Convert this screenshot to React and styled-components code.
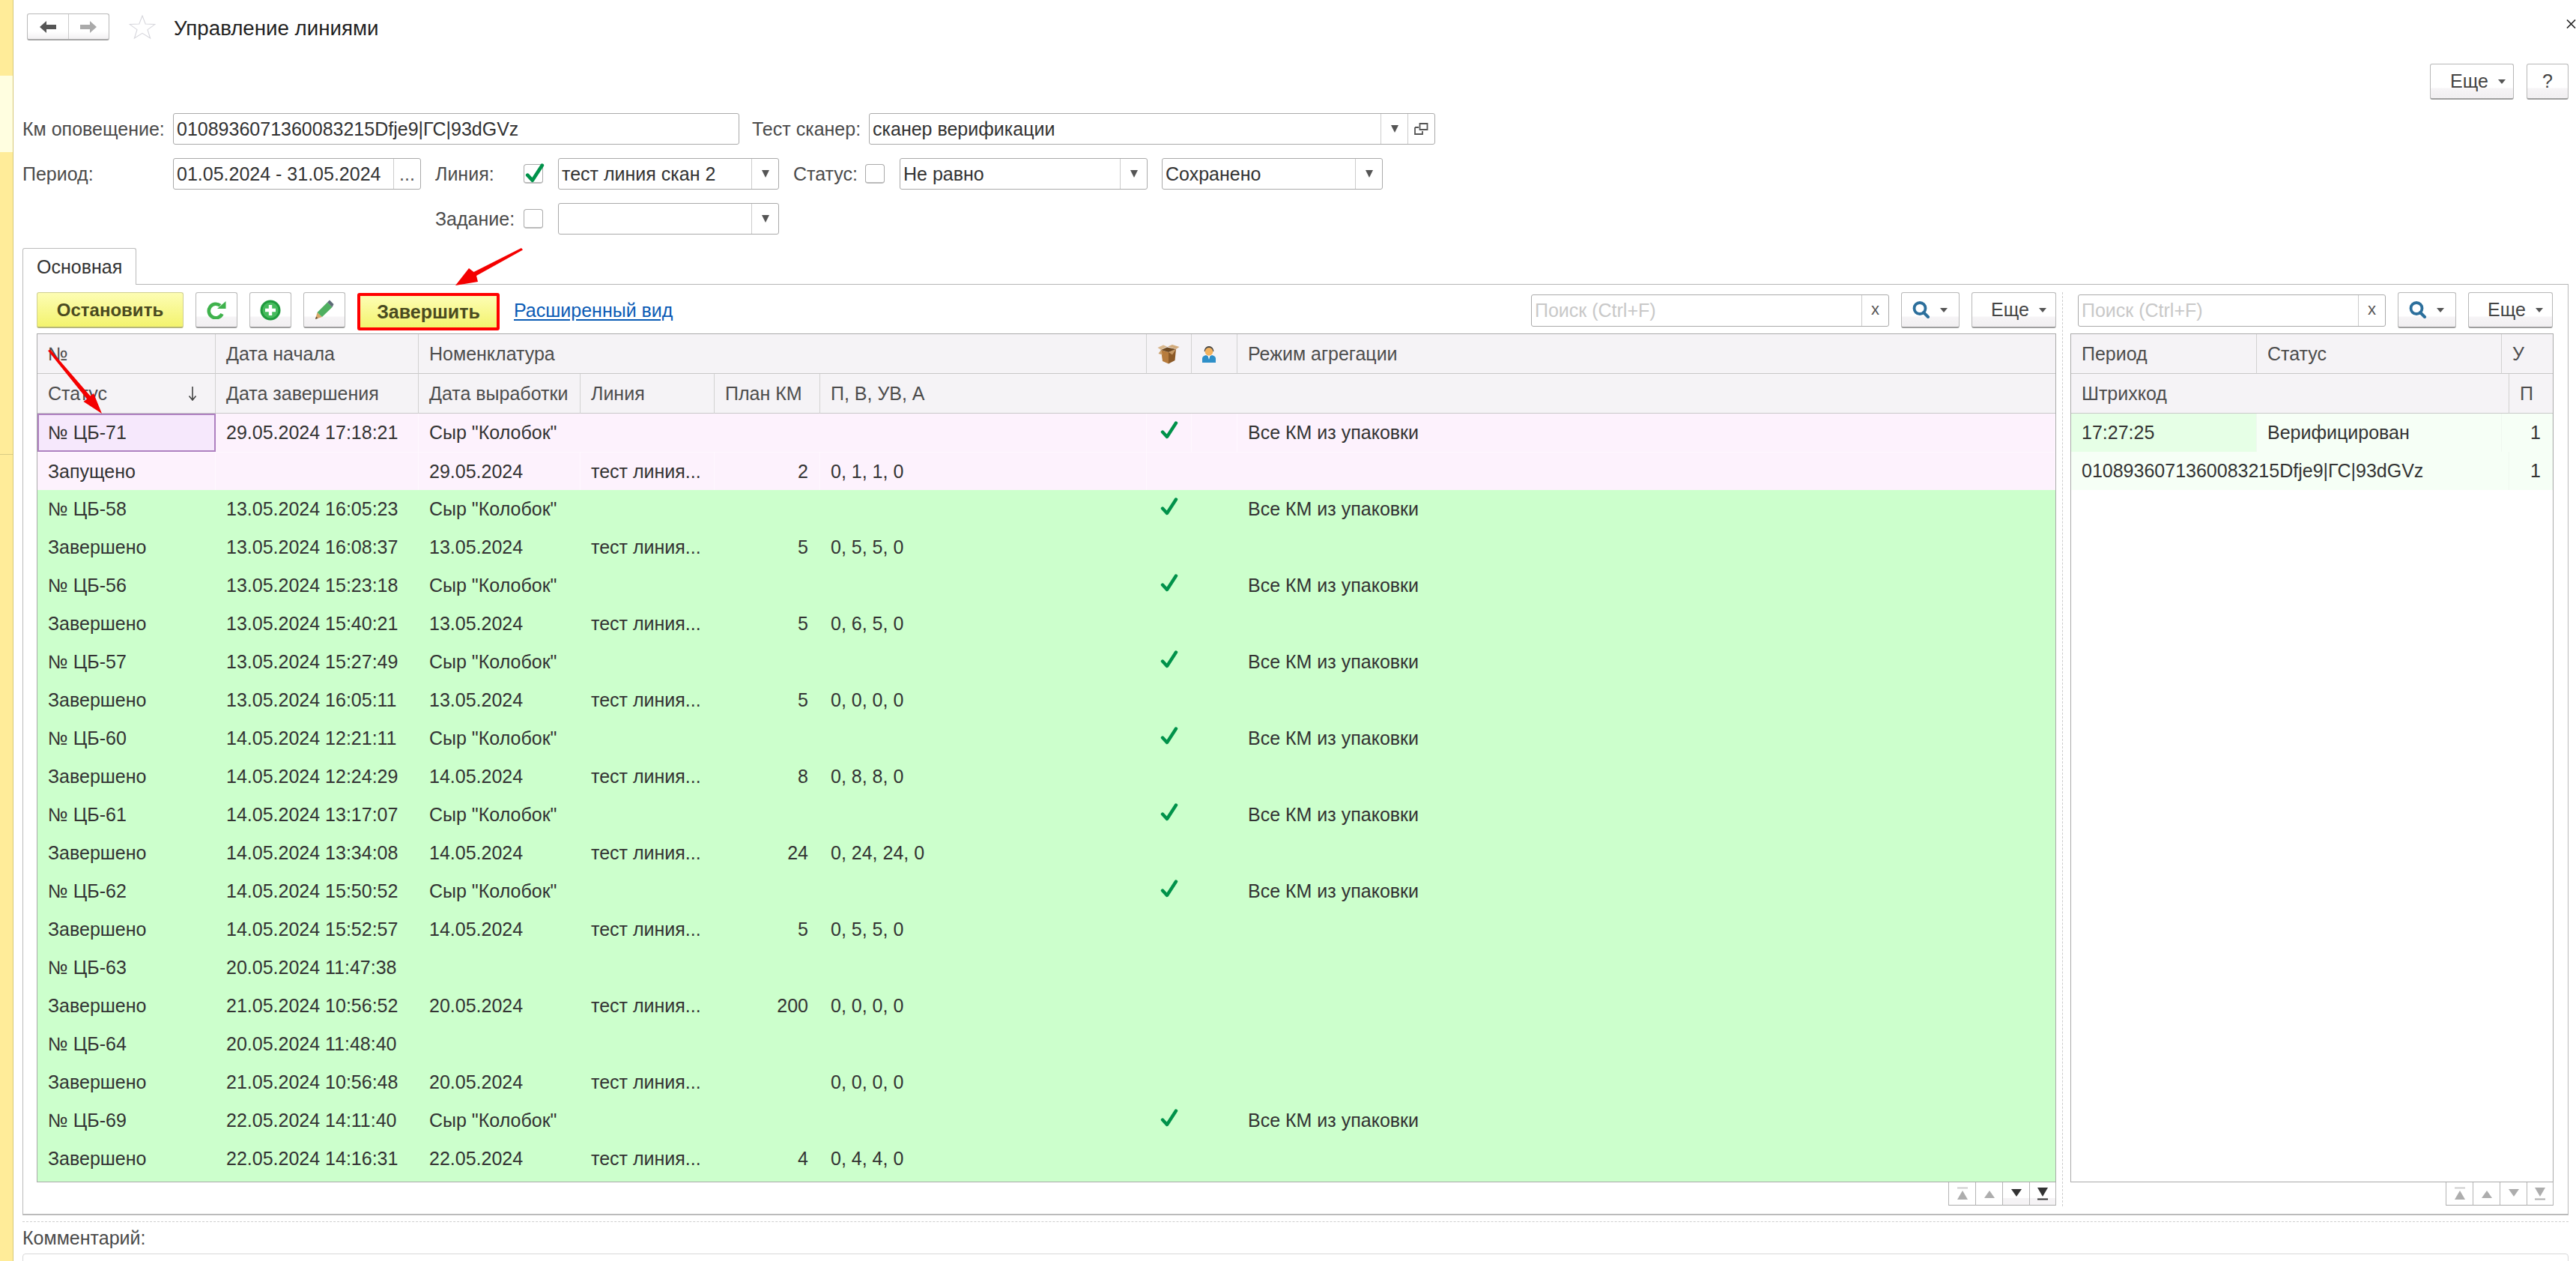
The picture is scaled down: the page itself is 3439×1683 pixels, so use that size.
import React from 'react';
import styled, { createGlobalStyle } from 'styled-components';

const Global = createGlobalStyle`
  html, body { margin: 0; padding: 0; background: #fff; overflow: hidden; }
  * { box-sizing: border-box; }
  body { font-family: "Liberation Sans", Arial, sans-serif; font-size: 25px; color: #333; }
`;

const Page = styled.div`
  position: relative;
  display: flex;
  width: 3439px;
  height: 1683px;
  overflow: hidden;
`;
const Sidebar = styled.aside`
  width: 18px;
  flex: none;
  display: flex;
  flex-direction: column;
  border-right: 1px solid #d6c878;
`;
const SideBlock = styled.div`
  height: ${p => p.$h ? `${p.$h}px` : 'auto'};
  flex: ${p => p.$h ? 'none' : 1};
  background: ${p => p.$light ? '#fffee0' : '#ffec99'};
  border-bottom: ${p => p.$line ? '1px solid #d8cb85' : 'none'};
`;
const Main = styled.main`
  flex: 1;
  min-width: 0;
  display: flex;
  flex-direction: column;
  padding: 18px 10px 0 12px;
  & > * { flex: none; }
`;
const TitleBar = styled.header`
  display: flex;
  align-items: center;
  height: 36px;
  padding-left: 6px;
  margin-right: -10px;
`;
const NavGroup = styled.div`
  display: flex;
  width: 110px;
  height: 36px;
  border: 1px solid #b8b8b8;
  border-bottom: 2px solid #a5a5a5;
  border-radius: 3px;
  background: linear-gradient(#fff 70%, #f2f0f2 100%);
`;
const NavButton = styled.div`
  flex: 1;
  display: flex;
  align-items: center;
  justify-content: center;
  & + & { border-left: 1px solid #ccc; }
`;
const StarBox = styled.div`
  margin-left: 26px;
  width: 36px;
  height: 32px;
  display: flex;
`;
const Title = styled.h1`
  margin: 3px 0 0 24px;
  font-size: 27.7px;
  font-weight: 400;
  color: #1f1f1f;
  flex: 1;
`;
const CloseBox = styled.div`
  width: 13px;
  height: 12px;
  display: flex;
  margin-bottom: 8px;
`;
const ActionBar = styled.div`
  display: flex;
  justify-content: flex-end;
  gap: 17px;
  margin-top: 31px;
`;
const Button = styled.div`
  height: ${p => p.$h || 48}px;
  width: ${p => p.$w}px;
  flex: none;
  display: flex;
  align-items: center;
  justify-content: ${p => p.$start ? 'flex-start' : 'center'};
  padding-left: ${p => p.$start ? p.$start : 0}px;
  gap: 13px;
  color: #444;
  border: 1px solid #b8b8b8;
  border-bottom: 2px solid #9f9f9f;
  border-radius: 3px;
  background: linear-gradient(#fff 68%, #f6f4f6 72%, #f1eff1 100%);
`;
const PrimaryButton = styled.div`
  height: 48px;
  width: ${p => p.$w}px;
  flex: none;
  display: flex;
  align-items: center;
  justify-content: center;
  font-weight: 700;
  font-size: 24px;
  color: #4a4a20;
  border: 1px solid #cfcf90;
  border-bottom: 2px solid #b6b67a;
  border-radius: 3px;
  background: linear-gradient(#fdfdb4, #f3f36e);
`;
const MarkedButton = styled(PrimaryButton)`
  height: 50px;
  margin-top: 1px;
  font-size: 25px;
  border: 4px solid #ff0000;
  border-radius: 3px;
  background: linear-gradient(#fdfdb4, #f3f36e);
`;
const Caret = styled.span`
  width: 0;
  height: 0;
  border-left: 5px solid transparent;
  border-right: 5px solid transparent;
  border-top: ${p => p.$tall ? 10 : 6}px solid #555;
`;
const Filters = styled.section`
  display: flex;
  flex-direction: column;
  gap: 18px;
  margin-top: 18px;
`;
const FilterRow = styled.div`
  display: flex;
  align-items: center;
  height: 42px;
`;
const Label = styled.label`
  flex: none;
  width: ${p => p.$w}px;
  margin-left: ${p => p.$ml || 0}px;
  color: #4b4b4b;
  white-space: nowrap;
`;
const Field = styled.div`
  flex: none;
  display: flex;
  width: ${p => p.$w}px;
  height: ${p => p.$h || 42}px;
  margin-left: ${p => p.$ml || 0}px;
  border: 1px solid #aaa;
  border-radius: 3px;
  background: #fff;
`;
const FieldText = styled.div`
  flex: 1;
  min-width: 0;
  display: flex;
  align-items: center;
  padding-left: 4px;
  color: ${p => p.$muted ? '#c8c8c8' : '#333'};
  white-space: nowrap;
  overflow: hidden;
`;
const Trigger = styled.div`
  flex: none;
  width: 36px;
  display: flex;
  align-items: center;
  justify-content: center;
  border-left: 1px solid #ccc;
  color: #555;
`;
const CheckBox = styled.div`
  position: relative;
  flex: none;
  width: 26px;
  height: 26px;
  margin-left: ${p => p.$ml || 0}px;
  border: 1px solid #aaa;
  border-bottom: 2px solid #bbb;
  border-radius: 4px;
  background: #fff;
  svg { position: absolute; left: 1px; top: -4px; }
`;
const Tabs = styled.div`
  display: flex;
  margin-top: 18px;
  height: 48px;
`;
const Tab = styled.div`
  width: 152px;
  height: 49px;
  padding-left: 18px;
  display: flex;
  align-items: center;
  border: 1px solid #bbb;
  border-bottom: none;
  border-radius: 3px 3px 0 0;
  background: #fff;
  position: relative;
  z-index: 1;
`;
const Panel = styled.section`
  display: flex;
  height: 1243px;
  padding: 10px 19px 0 18px;
  border: 1px solid #bbb;
  border-top-color: #b5b5b5;
  border-bottom-width: 2px;
  width: 3399px;
`;
const Pane = styled.div`
  display: flex;
  flex-direction: column;
  flex: ${p => p.$w ? 'none' : 1};
  width: ${p => p.$w ? `${p.$w}px` : 'auto'};
  min-width: 0;
`;
const Splitter = styled.div`
  flex: none;
  width: 19px;
  height: 1220px;
  display: flex;
  justify-content: center;
  &::before {
    content: '';
    border-left: 1px dashed #ccc;
    margin-left: -2px;
  }
`;
const Toolbar = styled.div`
  display: flex;
  align-items: flex-start;
  height: 48px;
  gap: 16px;
  margin-bottom: 7px;
`;
const Link = styled.a`
  margin-left: 3px;
  height: 48px;
  display: flex;
  align-items: center;
  color: #0a5bb5;
  text-decoration: underline;
  text-underline-offset: 3px;
`;
const Grow = styled.div`
  flex: 1;
`;
const SearchField = styled(Field)`
  margin-top: 3px;
  height: 43px;
`;
const Clear = styled(Trigger)`
  font-size: 22px;
  padding-bottom: 3px;
`;
const Grid = styled.div`
  flex: none;
  height: 1133px;
  background: ${p => p.$fill || '#fff'};
  border: 1px solid #aaa;
  overflow: hidden;
`;
const Line = styled.div`
  display: grid;
  grid-template-columns: ${p => p.$cols};
  height: ${p => p.$h || 51}px;
`;
const HeadCell = styled.div`
  grid-column: span ${p => p.$span || 1};
  display: flex;
  align-items: center;
  justify-content: space-between;
  padding: 0 ${p => p.$pr || 14}px 0 14px;
  background: #f5f3f6;
  color: #4d4d4d;
  border-bottom: 1px solid #c8c8c8;
  border-right: ${p => p.$noEdge ? 'none' : '1px solid #d2d2d2'};
  white-space: nowrap;
  overflow: hidden;
`;
const palette = {
  pink: { bg: '#fdf2fd', edge: '#fff8ff' },
  green: { bg: '#ccffcc', edge: '#ccffcc' },
  soft: { bg: '#f6fff6', edge: '#f0f8f0' },
};
const Cell = styled.div`
  grid-column: span ${p => p.$span || 1};
  display: flex;
  align-items: center;
  justify-content: ${p => p.$right ? 'flex-end' : p.$center ? 'center' : 'flex-start'};
  padding: ${p => p.$center ? '0 0 8px 0' : `0 ${p.$right ? 15 : 14}px 0 14px`};
  background: ${p => p.$bg ? p.$bg : palette[p.$tone].bg};
  border-right: 1px solid ${p => palette[p.$tone].edge};
  color: #333;
  white-space: nowrap;
  overflow: hidden;
`;
const SelectedCell = styled(Cell)`
  background: #f6e8fc;
  border: 2px solid #ae80c0;
  padding-left: 12px;
`;
const Record = styled.div`
  height: 102px;
  border-bottom: 1px solid ${p => p.$tone === 'pink' ? '#eef0e8' : p.$tone === 'green' ? '#dcecd8' : '#e6eee6'};
  ${p => p.$tone === 'pink' ? `& > ${Line} + ${Line} { border-top: 1px solid #fff8ff; }` : ''}
`;
const Pager = styled.div`
  display: flex;
  justify-content: flex-end;
`;
const PagerButton = styled.div`
  width: 36px;
  height: 31px;
  display: flex;
  align-items: center;
  justify-content: center;
  border-left: 1px solid #b5b5b5;
  border-bottom: 1px solid #aaa;
  background: ${p => p.$active ? 'linear-gradient(#fff 70%, #f5f3f5 70%)' : '#fff'};
  &:last-child { border-right: 1px solid #b5b5b5; }
`;
const Dashed = styled.hr`
  margin: 8px 0 0;
  border: 0;
  border-top: 1px dashed #cfcfcf;
`;
const CommentLabel = styled.div`
  height: 42px;
  display: flex;
  align-items: center;
  color: #4b4b4b;
`;
const Comment = styled.div`
  height: 40px;
  border: 1px solid #d8d8d8;
  border-radius: 4px;
`;
const Overlay = styled.svg`
  position: absolute;
  left: 0;
  top: 0;
  pointer-events: none;
`;

const Check = ({ w = 24, h = 24 }) => (
  <svg width={w} height={h} viewBox="0 0 24 24">
    <path d="M3 14.5 L9 21 L21 2.5" fill="none" stroke="#00924a" strokeWidth="4.4" strokeLinecap="round" strokeLinejoin="round" />
  </svg>
);
const ArrowH = ({ dir, color }) => (
  <svg width="22" height="16" viewBox="0 0 22 16">
    <path d={dir === 'l' ? 'M0 8 L9 0 V5 H22 V11 H9 V16 Z' : 'M22 8 L13 0 V5 H0 V11 H13 V16 Z'} fill={color} />
  </svg>
);
const Star = () => (
  <svg width="36" height="32" viewBox="0 0 36 32">
    <path d="M18 1 L22.2 12 L35 12.4 L25 19.6 L28.6 31 L18 24.4 L7.4 31 L11 19.6 L1 12.4 L13.8 12 Z" fill="#fff" stroke="#d6d6dc" strokeWidth="1.1" />
  </svg>
);
const Close = () => (
  <svg width="13" height="12" viewBox="0 0 13 12">
    <path d="M1 0.5 L12 11.5 M12 0.5 L1 11.5" stroke="#222" strokeWidth="1.6" />
  </svg>
);
const OpenIcon = () => (
  <svg width="19" height="16" viewBox="0 0 19 16">
    <path d="M7.5 1 H17.5 V9 H7.5 Z M1 6 H6 M1 6 V15 H11 V11" fill="none" stroke="#555" strokeWidth="1.8" />
  </svg>
);
const Refresh = () => (
  <svg width="26" height="24" viewBox="0 0 26 24">
    <path d="M20.5 17 A9.3 9.3 0 1 1 18 5.8" fill="none" stroke="#3fb24c" strokeWidth="4.6" />
    <path d="M14 10 H25.5 V0 Z" fill="#3fb24c" />
  </svg>
);
const Plus = () => (
  <svg width="28" height="28" viewBox="0 0 28 28">
    <circle cx="14" cy="14" r="13.5" fill="#1f9a3d" />
    <circle cx="14" cy="14" r="10.5" fill="#45bb5c" />
    <path d="M14 7 V21 M7 14 H21" stroke="#fff" strokeWidth="4.4" />
  </svg>
);
const Pencil = () => (
  <svg width="26" height="27" viewBox="0 0 26 27">
    <path d="M1 26 L3.5 17 L10 23 Z" fill="#d8a868" />
    <path d="M1 26 L2 22.5 L4.5 24.8 Z" fill="#5a4a30" />
    <path d="M3.5 17 L17 3.5 L23.5 10 L10 23 Z" fill="#4fb060" />
    <path d="M17 3.5 L20 0.5 L25.5 6 L23.5 10 Z" fill="#5d6b78" />
  </svg>
);
const Magnifier = () => (
  <svg width="24" height="23" viewBox="0 0 24 23">
    <circle cx="10" cy="9.5" r="7.5" fill="#fff" stroke="#2c6f9c" strokeWidth="3.8" />
    <path d="M15 15 L21 21" stroke="#2c6f9c" strokeWidth="4" strokeLinecap="round" />
  </svg>
);
const Box = () => (
  <svg width="30" height="27" viewBox="0 0 30 27">
    <path d="M5 8 L15 11 V26.5 L7 23 Z" fill="#b77c3d" />
    <path d="M15 11 L25 7 L23.5 22 L15 26.5 Z" fill="#8c5a28" />
    <path d="M5 8 L13 4.5 L25 7 L15 11 Z" fill="#6e4820" />
    <path d="M5 8 L0.5 5 L8 1.5 L13 3.5 Z" fill="#d9b88e" />
    <path d="M25 7 L29.5 4 L20 1 L14 3.5 Z" fill="#d2ab7c" />
    <path d="M5 8 L1.5 13 L7 14.5 Z" fill="#cba06c" />
    <path d="M15 11 L20 14.5 L25 7 Z" fill="#c79a66" />
  </svg>
);
const Person = () => (
  <svg width="18" height="23" viewBox="0 0 18 23">
    <path d="M0 23 V17.5 Q0 14 5 13 L9 15 L13 13 Q18 14 18 17.5 V23 Z" fill="#2e8fc8" />
    <path d="M7.6 14 H10.4 L9 19 Z" fill="#fff" />
    <ellipse cx="9" cy="7.5" rx="5.5" ry="6.2" fill="#f2b25f" />
    <path d="M2.6 8 A6.4 7 0 0 1 15.4 8 L14.2 8 A5.2 5 0 0 0 3.8 8 Z" fill="#444" />
  </svg>
);
const SortDown = () => (
  <svg width="12" height="19" viewBox="0 0 12 19">
    <path d="M6 0 V18 M1.5 12.5 L6 18 L10.5 12.5" fill="none" stroke="#444" strokeWidth="1.6" />
  </svg>
);
const PagerIcon = ({ kind, color }) => {
  const bar = kind === 'first' || kind === 'last';
  const up = kind === 'first' || kind === 'prev';
  return (
    <svg width="16" height="18" viewBox="0 0 16 18">
      {up
        ? <path d={bar ? 'M8 5 L15 17 H1 Z' : 'M8 5 L15 15 H1 Z'} fill={color} />
        : <path d={bar ? 'M8 13 L15 1 H1 Z' : 'M8 13 L15 3 H1 Z'} fill={color} />}
      {bar && <path d={up ? 'M1 1.5 H15' : 'M1 16.5 H15'} stroke={color} strokeWidth="2" opacity={kind === 'last' ? 1 : 0.6} />}
    </svg>
  );
};

const LEFT_COLS = '238px 271px 216px 179px 141px 436px 60px 61px 1fr';
const RIGHT_TOP = '248px 327px 1fr';
const RIGHT_BOTTOM = '585px 1fr';

const row = (num, start, name, check, status, end, made, plan, counts, tone = 'green') =>
  ({ num, start, name, check, status, end, made, plan, counts, tone });
const KOL = 'Сыр "Колобок"';
const rows = [
  row('№ ЦБ-71', '29.05.2024 17:18:21', KOL, true, 'Запущено', '', '29.05.2024', '2', '0, 1, 1, 0', 'pink'),
  row('№ ЦБ-58', '13.05.2024 16:05:23', KOL, true, 'Завершено', '13.05.2024 16:08:37', '13.05.2024', '5', '0, 5, 5, 0'),
  row('№ ЦБ-56', '13.05.2024 15:23:18', KOL, true, 'Завершено', '13.05.2024 15:40:21', '13.05.2024', '5', '0, 6, 5, 0'),
  row('№ ЦБ-57', '13.05.2024 15:27:49', KOL, true, 'Завершено', '13.05.2024 16:05:11', '13.05.2024', '5', '0, 0, 0, 0'),
  row('№ ЦБ-60', '14.05.2024 12:21:11', KOL, true, 'Завершено', '14.05.2024 12:24:29', '14.05.2024', '8', '0, 8, 8, 0'),
  row('№ ЦБ-61', '14.05.2024 13:17:07', KOL, true, 'Завершено', '14.05.2024 13:34:08', '14.05.2024', '24', '0, 24, 24, 0'),
  row('№ ЦБ-62', '14.05.2024 15:50:52', KOL, true, 'Завершено', '14.05.2024 15:52:57', '14.05.2024', '5', '0, 5, 5, 0'),
  row('№ ЦБ-63', '20.05.2024 11:47:38', '', false, 'Завершено', '21.05.2024 10:56:52', '20.05.2024', '200', '0, 0, 0, 0'),
  row('№ ЦБ-64', '20.05.2024 11:48:40', '', false, 'Завершено', '21.05.2024 10:56:48', '20.05.2024', '', '0, 0, 0, 0'),
  row('№ ЦБ-69', '22.05.2024 14:11:40', KOL, true, 'Завершено', '22.05.2024 14:16:31', '22.05.2024', '4', '0, 4, 4, 0'),
];

const GridPager = ({ active }) => (
  <Pager>
    {['first', 'prev', 'next', 'last'].map((k, i) => {
      const on = active && i > 1;
      return (
        <PagerButton key={k} $active={on}>
          <PagerIcon kind={k} color={on ? '#333' : '#adadad'} />
        </PagerButton>
      );
    })}
  </Pager>
);

const SearchTools = ({ fieldW, ml }) => (
  <>
    <SearchField $w={fieldW} $ml={ml}>
      <FieldText $muted>Поиск (Ctrl+F)</FieldText>
      <Clear>x</Clear>
    </SearchField>
    <Button $w={78} $start={14}><Magnifier /><Caret /></Button>
    <Button $w={113} $start={25}>Еще<Caret /></Button>
  </>
);

export default function App() {
  return (
    <Page>
      <Global />
      <Sidebar>
        <SideBlock $h={101} />
        <SideBlock $h={102} $light />
        <SideBlock $h={404} $line />
        <SideBlock />
      </Sidebar>
      <Main>
        <TitleBar>
          <NavGroup>
            <NavButton><ArrowH dir="l" color="#555" /></NavButton>
            <NavButton><ArrowH dir="r" color="#aaa" /></NavButton>
          </NavGroup>
          <StarBox><Star /></StarBox>
          <Title>Управление линиями</Title>
          <CloseBox><Close /></CloseBox>
        </TitleBar>
        <ActionBar>
          <Button $w={112} $start={26}>Еще<Caret /></Button>
          <Button $w={56}>?</Button>
        </ActionBar>
        <Filters>
          <FilterRow>
            <Label $w={201}>Км оповещение:</Label>
            <Field $w={756}><FieldText>0108936071360083215Dfje9|ГС|93dGVz</FieldText></Field>
            <Label $w={156} $ml={17}>Тест сканер:</Label>
            <Field $w={756}>
              <FieldText>сканер верификации</FieldText>
              <Trigger><Caret $tall /></Trigger>
              <Trigger><OpenIcon /></Trigger>
            </Field>
          </FilterRow>
          <FilterRow>
            <Label $w={201}>Период:</Label>
            <Field $w={331}>
              <FieldText>01.05.2024 - 31.05.2024</FieldText>
              <Trigger>...</Trigger>
            </Field>
            <Label $w={118} $ml={19}>Линия:</Label>
            <CheckBox><Check w={26} h={30} /></CheckBox>
            <Field $w={295} $ml={20}>
              <FieldText>тест линия скан 2</FieldText>
              <Trigger><Caret $tall /></Trigger>
            </Field>
            <Label $w={96} $ml={19}>Статус:</Label>
            <CheckBox />
            <Field $w={331} $ml={20}>
              <FieldText>Не равно</FieldText>
              <Trigger><Caret $tall /></Trigger>
            </Field>
            <Field $w={295} $ml={19}>
              <FieldText>Сохранено</FieldText>
              <Trigger><Caret $tall /></Trigger>
            </Field>
          </FilterRow>
          <FilterRow>
            <Label $w={118} $ml={551}>Задание:</Label>
            <CheckBox />
            <Field $w={295} $ml={20}>
              <FieldText />
              <Trigger><Caret $tall /></Trigger>
            </Field>
          </FilterRow>
        </Filters>
        <Tabs><Tab>Основная</Tab></Tabs>
        <Panel>
          <Pane>
            <Toolbar>
              <PrimaryButton $w={196}>Остановить</PrimaryButton>
              <Button $w={56}><Refresh /></Button>
              <Button $w={56}><Plus /></Button>
              <Button $w={56}><Pencil /></Button>
              <MarkedButton $w={190}>Завершить</MarkedButton>
              <Link>Расширенный вид</Link>
              <Grow />
              <SearchTools fieldW={478} />
            </Toolbar>
            <Grid $fill="#ccffcc">
              <Line $cols={LEFT_COLS} $h={53}>
                <HeadCell>№</HeadCell>
                <HeadCell>Дата начала</HeadCell>
                <HeadCell $span={4}>Номенклатура</HeadCell>
                <HeadCell><Box /></HeadCell>
                <HeadCell><Person /></HeadCell>
                <HeadCell $noEdge>Режим агрегации</HeadCell>
              </Line>
              <Line $cols={LEFT_COLS} $h={53}>
                <HeadCell $pr={24}>Статус<SortDown /></HeadCell>
                <HeadCell>Дата завершения</HeadCell>
                <HeadCell>Дата выработки</HeadCell>
                <HeadCell>Линия</HeadCell>
                <HeadCell>План КМ</HeadCell>
                <HeadCell $noEdge>П, В, УВ, А</HeadCell>
                <HeadCell $span={3} $noEdge />
              </Line>
              {rows.map((r, i) => (
                <Record key={r.num} $tone={r.tone}>
                  <Line $cols={LEFT_COLS}>
                    {i === 0 ? <SelectedCell $tone={r.tone}>{r.num}</SelectedCell> : <Cell $tone={r.tone}>{r.num}</Cell>}
                    <Cell $tone={r.tone}>{r.start}</Cell>
                    <Cell $tone={r.tone} $span={4}>{r.name}</Cell>
                    <Cell $tone={r.tone} $center>{r.check && <Check />}</Cell>
                    <Cell $tone={r.tone} />
                    <Cell $tone={r.tone}>{r.check && 'Все КМ из упаковки'}</Cell>
                  </Line>
                  <Line $cols={LEFT_COLS}>
                    <Cell $tone={r.tone}>{r.status}</Cell>
                    <Cell $tone={r.tone}>{r.end}</Cell>
                    <Cell $tone={r.tone}>{r.made}</Cell>
                    <Cell $tone={r.tone}>тест линия...</Cell>
                    <Cell $tone={r.tone} $right>{r.plan}</Cell>
                    <Cell $tone={r.tone}>{r.counts}</Cell>
                    <Cell $tone={r.tone} $span={3} />
                  </Line>
                </Record>
              ))}
            </Grid>
            <GridPager active />
          </Pane>
          <Splitter />
          <Pane $w={645}>
            <Toolbar>
              <SearchTools fieldW={411} ml={10} />
            </Toolbar>
            <Grid>
              <Line $cols={RIGHT_TOP} $h={53}>
                <HeadCell>Период</HeadCell>
                <HeadCell>Статус</HeadCell>
                <HeadCell $noEdge>У</HeadCell>
              </Line>
              <Line $cols={RIGHT_BOTTOM} $h={53}>
                <HeadCell>Штрихкод</HeadCell>
                <HeadCell $noEdge>П</HeadCell>
              </Line>
              <Record $tone="soft">
                <Line $cols={RIGHT_TOP}>
                  <Cell $tone="soft" $bg="#e6ffe6">17:27:25</Cell>
                  <Cell $tone="soft">Верифицирован</Cell>
                  <Cell $tone="soft" $right>1</Cell>
                </Line>
                <Line $cols={RIGHT_BOTTOM}>
                  <Cell $tone="soft">0108936071360083215Dfje9|ГС|93dGVz</Cell>
                  <Cell $tone="soft" $right>1</Cell>
                </Line>
              </Record>
            </Grid>
            <GridPager />
          </Pane>
        </Panel>
        <Dashed />
        <CommentLabel>Комментарий:</CommentLabel>
        <Comment />
      </Main>
      <Overlay width="3439" height="1683" viewBox="0 0 3439 1683">
        <path d="M696 331 L698 333.5 L636 368 L638 376 L608 381 L626 358 L632.5 363 Z" fill="#f40000" />
        <path d="M64 468 L67 466.5 L120.5 528.5 L125 525 L136 552 L111.5 536 L116 532.5 Z" fill="#f40000" />
      </Overlay>
    </Page>
  );
}
